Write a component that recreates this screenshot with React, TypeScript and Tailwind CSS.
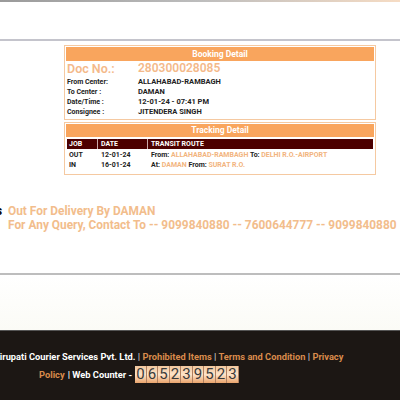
import React from "react";

const digits = "065239523".split("");

export default function App() {
  return (
    <div className="w-[400px] h-[400px] overflow-hidden bg-white font-['Roboto',_'Liberation_Sans',_sans-serif] relative">
      <div className="h-[2px] bg-gradient-to-r from-[#9a9a9a] via-[#bdbdbd] to-[#f6dcc4]" />
      <div className="h-[37px] bg-white" />
      <div className="h-[2px] bg-[#c4c4cc]" />
      <div className="pt-[4px] pl-[64px]">
        {/* Booking */}
        <div className="w-[312px] border border-[#f5c9a1] p-[1px]">
          <div className="h-[14px] bg-[#f9a55d] text-white text-[8.5px] font-bold leading-[14px] text-center">Booking Detail</div>
          <div className="grid grid-cols-[71px_1fr] px-[1px]">
            <div className="text-[12.5px] font-semibold leading-[15px] text-[#f4b98a]">Doc No.:</div>
            <div className="text-[12px] font-semibold leading-[15px] text-[#f4b98a]">280300028085</div>
          </div>
          <div className="grid grid-cols-[71px_1fr] px-[1px] pt-[1px] pb-[1px] text-[7px] font-bold leading-[10px] text-[#222]">
            <div>From Center:</div>
            <div className="text-[7.5px]">ALLAHABAD-RAMBAGH</div>
            <div>To Center :</div>
            <div className="text-[7.5px]">DAMAN</div>
            <div>Date/Time :</div>
            <div className="text-[7.5px]">12-01-24 - 07:41 PM</div>
            <div>Consignee :</div>
            <div className="text-[7.5px]">JITENDERA SINGH</div>
          </div>
        </div>
        {/* Tracking */}
        <div className="w-[312px] mt-[2px] border border-[#f5c9a1] p-[1px]">
          <div className="h-[13px] bg-[#f9a55d] text-white text-[8.5px] font-bold leading-[13px] text-center">Tracking Detail</div>
          <div className="px-[1px] pt-[2px] pb-[3px] text-[7px] font-bold">
            <div className="grid grid-cols-[31px_50px_1fr] bg-[#4d0000] text-white leading-[10px]">
              <div className="pl-[2px] border-r border-[#caa]">JOB</div>
              <div className="pl-[3px] border-r border-[#caa]">DATE</div>
              <div className="pl-[3px]">TRANSIT ROUTE</div>
            </div>
            <div className="grid grid-cols-[31px_50px_1fr] text-[#222] leading-[10px] pt-[1px]">
              <div className="pl-[2px]">OUT</div>
              <div className="pl-[3px]">12-01-24</div>
              <div className="pl-[3px]">From: <span className="text-[#f2b47e]">ALLAHABAD-RAMBAGH</span> To: <span className="text-[#f2b47e]">DELHI R.O.-AIRPORT</span></div>
              <div className="pl-[2px]">IN</div>
              <div className="pl-[3px]">16-01-24</div>
              <div className="pl-[3px]">At: <span className="text-[#f2b47e]">DAMAN</span> From: <span className="text-[#f2b47e]">SURAT R.O.</span></div>
            </div>
          </div>
        </div>
      </div>
      {/* status */}
      <div className="mt-[29px] flex text-[11.9px] font-bold leading-[14px]">
        <div className="ml-[-4px] w-[12px] text-black">s</div>
        <div className="text-[#f2bd8c]">
          <div>Out For Delivery By DAMAN</div>
          <div className="whitespace-nowrap">For Any Query, Contact To -- 9099840880 -- 7600644777 -- 9099840880</div>
        </div>
      </div>
      <div className="mt-[41px] h-[2px] bg-[#bdbdbd]" />
      <div className="h-[55px] bg-gradient-to-b from-white to-[#fbfbf6]" />
      <div className="h-[72px] bg-[#1c1714] border-t border-[#555]">
        <div className="pt-[20px] whitespace-nowrap text-[9.3px] font-bold leading-[12px] text-white">
          <div className="ml-[-6px]">
            Tirupati Courier Services Pvt. Ltd. <span className="text-[#c9c9c9]">|</span> <span className="text-[#d98b4c]">Prohibited Items</span> <span className="text-[#c9c9c9]">|</span> <span className="text-[#d98b4c]">Terms and Condition</span> <span className="text-[#c9c9c9]">|</span> <span className="text-[#d98b4c]">Privacy</span>
          </div>
        </div>
        <div className="mt-[3px] pl-[39px] flex items-center text-[9.3px] font-bold text-white">
          <span className="text-[#d98b4c]">Policy</span>
          <span className="ml-[3px]">| Web Counter -</span>
          <div className="ml-[3px] flex">
            {digits.map((d, i) => (
              <div key={i} className="w-[11.5px] h-[17px] bg-gradient-to-b from-[#f1c79e] via-[#fde3c8] to-[#e9a46c] border-r border-[#b08060] text-[#3a3a3a] text-[15px] font-normal leading-[17px] text-center">
                {d}
              </div>
            ))}
          </div>
        </div>
      </div>
    </div>
  );
}
